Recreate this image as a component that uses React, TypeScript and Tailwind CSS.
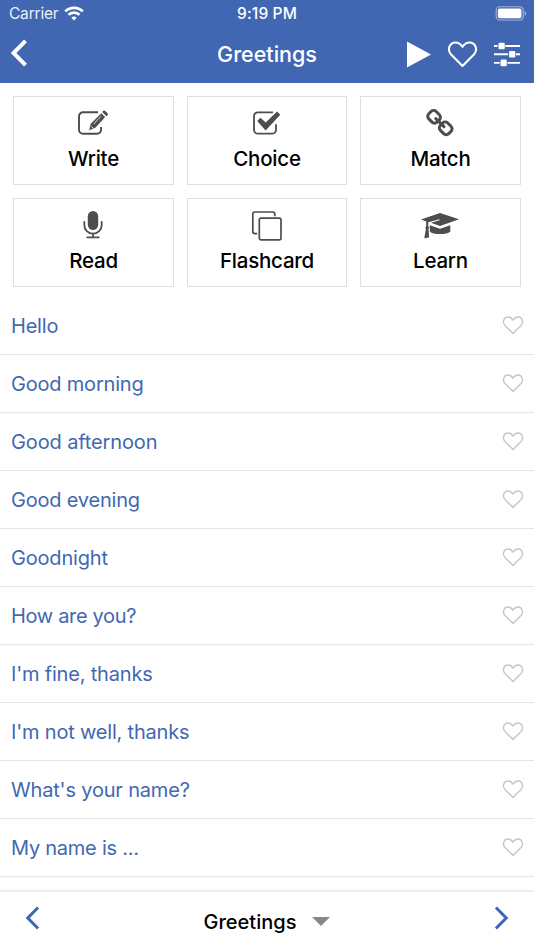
import type { ReactNode } from "react";

const HEART = "M15 25 L3.6 13.6 C-.8 8.6 2.2 1.5 8 1.5 C11.2 1.5 13.4 3.3 15 5.8 C16.6 3.3 18.8 1.5 22 1.5 C27.8 1.5 30.8 8.6 26.4 13.6 Z";

function Heart({ className, stroke }: { className: string; stroke: number }) {
  return (
    <svg viewBox="0 0 30 27" className={className} fill="none" stroke="currentColor" strokeWidth={stroke} strokeLinejoin="round">
      <path d={HEART} />
    </svg>
  );
}

const icons: Record<string, ReactNode> = {
  write: (
    <>
      <path d="M25 4.3H10a4 4 0 0 0-4 4v13.4a4 4 0 0 0 4 4h14a4 4 0 0 0 4-4V19" fill="none" stroke="currentColor" strokeWidth="1.9" />
      <path d="M28.3 5.1l4.2 3.9-10.1 11.1-6.6 2.7 1.6-7z" fill="currentColor" stroke="white" strokeWidth=".6" />
      <path d="M29.2 4l1-1c.6-.6 1.3-.6 1.9 0l2.4 2.3c.6.6.6 1.3 0 1.9l-1 1z" fill="currentColor" />
      <path d="M20.6 16.2l7.4-8M18 18.2l2.4 2.2" fill="none" stroke="white" strokeWidth=".8" />
    </>
  ),
  choice: (
    <>
      <path d="M26 4.3H11a4 4 0 0 0-4 4v13.4a4 4 0 0 0 4 4h14a4 4 0 0 0 4-4v-5.4" fill="none" stroke="currentColor" strokeWidth="1.8" />
      <path d="M10.2 13.1l3.2-3.4 5.3 4.9L30 3.4l3.3 3.3-14.7 15.8z" fill="currentColor" />
    </>
  ),
  match: (
    <g fill="none" stroke="currentColor" strokeWidth="3">
      <rect x="-5.9" y="-5.2" width="11.8" height="10.4" rx="3.6" transform="translate(14.1 8.8) rotate(45)" />
      <rect x="-5.9" y="-5.2" width="11.8" height="10.4" rx="3.6" transform="translate(25.7 20.3) rotate(45)" />
      <path d="M15.8 10.6l8.2 8" strokeLinecap="round" />
    </g>
  ),
  read: (
    <>
      <rect x="14.8" y="1" width="10.4" height="19" rx="5.2" fill="currentColor" />
      <path d="M11.3 11.8v3.1a8.7 8.7 0 0 0 17.4 0v-3.1M20 23.6v3.2M14.2 27.3h11.6" fill="none" stroke="currentColor" strokeWidth="1.8" strokeLinecap="round" />
    </>
  ),
  flashcard: (
    <g fill="none" stroke="currentColor" strokeWidth="1.7">
      <path d="M10.2 23.6H7.8a2 2 0 0 1-2-2V4a2 2 0 0 1 2-2h18a2 2 0 0 1 2 2v2.2" />
      <rect x="12.3" y="8.1" width="21.7" height="21.8" rx="1.8" />
    </g>
  ),
  learn: (
    <g fill="currentColor">
      <path d="M20 3l19 6.3-19 6.6-9.1-3.1 8.7-2.5-.3-1-11 3v4.1l1 1.2-.8 1.2.6 8.7-4.8.8 1.6-9.5-.7-1.3 1-1.2v-4.7L1 9.4z" />
      <path d="M9.8 15.3l10.2 3.4 10.3-3.5v6.2c-3.1 3.5-17.4 3.5-20.5 0z" />
    </g>
  ),
};

const tiles = [
  { id: "write", label: "Write", nudge: "mr-px" },
  { id: "choice", label: "Choice", nudge: "" },
  { id: "match", label: "Match", nudge: "mr-px" },
  { id: "read", label: "Read", nudge: "mr-px" },
  { id: "flashcard", label: "Flashcard", nudge: "" },
  { id: "learn", label: "Learn", nudge: "mr-px" },
];

const phrases = [
  { text: "Hello", track: "tracking-[-0.2px]" },
  { text: "Good morning", track: "tracking-[-0.2px]" },
  { text: "Good afternoon", track: "tracking-[-0.13px]" },
  { text: "Good evening", track: "tracking-[-0.2px]" },
  { text: "Goodnight", track: "tracking-[-0.18px]" },
  { text: "How are you?", track: "tracking-[-0.33px]" },
  { text: "I'm fine, thanks", track: "tracking-[-0.19px]" },
  { text: "I'm not well, thanks", track: "tracking-[-0.19px]" },
  { text: "What's your name?", track: "tracking-[-0.18px]" },
  { text: "My name is ...", track: "tracking-[-0.25px]" },
];

function Chevron({ className, right = false, stroke }: { className: string; right?: boolean; stroke: number }) {
  return (
    <svg viewBox="0 0 16 28" className={className} fill="none" stroke="currentColor" strokeWidth={stroke}>
      <path d={right ? "M1.5 1.8l12 12.2-12 12.2" : "M14.5 1.8L2.5 14l12 12.2"} />
    </svg>
  );
}

export default function App() {
  return (
    <div className="flex h-[950px] w-[534px] flex-col overflow-hidden bg-white font-['Inter',sans-serif]">
      <header className="h-[83px] shrink-0 bg-[#4267b2] text-white">
        <div className="grid h-7 grid-cols-3 items-center px-[9px]">
          <div className="flex items-center gap-[6px]">
            <span className="text-[15.5px] leading-7 tracking-[-0.2px] opacity-90">Carrier</span>
            <svg viewBox="0 0 20 15" className="mb-px h-[15px] w-5" fill="none" stroke="white" strokeWidth="2.7">
              <path d="M1.2 5.4a12.6 12.6 0 0 1 17.6 0M4.5 8.8a7.8 7.8 0 0 1 11 0" />
              <path d="M10 14.5l-2.7-2.8a3.9 3.9 0 0 1 5.4 0z" fill="white" stroke="none" />
            </svg>
          </div>
          <span className="text-center text-[15.5px] font-medium leading-7 tracking-[0.15px]">9:19 PM</span>
          <svg viewBox="0 0 32 16" className="-mr-[2px] h-4 w-8 justify-self-end">
            <rect x="1.2" y=".8" width="27" height="13.2" rx="3.5" fill="none" stroke="white" strokeOpacity=".5" strokeWidth="1.1" />
            <rect x="2.9" y="2.5" width="23.6" height="9.8" rx="1.8" fill="white" />
            <path d="M29.5 5.3c2.2.5 2.2 3.7 0 4.2z" fill="white" fillOpacity=".5" />
          </svg>
        </div>
        <div className="grid h-[52px] grid-cols-3 items-center pl-[10px] pr-[14px]">
          <Chevron className="mb-[2px] ml-px h-7 w-4 text-white" stroke={4} />
          <h1 className="ml-1 text-center text-[21.5px] font-medium leading-[52px]">Greetings</h1>
          <div className="flex items-center justify-end">
            <svg viewBox="0 0 24 27" className="h-[27px] w-6" fill="white"><path d="M0 .5l24 13-24 13z" /></svg>
            <Heart className="ml-4 h-[27px] w-[31px]" stroke={2.1} />
            <svg viewBox="0 0 26 26" className="ml-4 h-[26px] w-[26px]">
              <path d="M0 5h3.5M11.3 5H26M0 13.3h14M22 13.3h4M0 21.9h5.7M13.5 21.9H26" stroke="white" strokeWidth="1.9" />
              <g fill="white">
                <rect x="4.5" y="1.7" width="6.3" height="6.6" rx="1.3" />
                <rect x="15" y="10" width="6.3" height="6.6" rx="1.3" />
                <rect x="6.5" y="18.6" width="6.3" height="6.6" rx="1.3" />
              </g>
            </svg>
          </div>
        </div>
      </header>

      <main className="min-h-0 flex-1 overflow-hidden">
        <div className="grid grid-cols-[161px_160px_161px] gap-[13px] px-[13px] pt-[13px]">
          {tiles.map((tile) => (
            <button key={tile.id} className="flex h-[89px] flex-col items-center border border-[#dedfe0] pt-[11px]">
              <svg viewBox="0 0 40 32" className={`h-8 w-10 shrink-0 text-[#4d4d4d] ${tile.nudge}`}>{icons[tile.id]}</svg>
              <span className="mt-[5px] text-[20.5px] font-medium leading-7 tracking-[-0.22px] text-black">{tile.label}</span>
            </button>
          ))}
        </div>
        <ul className="mt-[10px]">
          {phrases.map((phrase) => (
            <li key={phrase.text} className="flex h-[58px] items-center justify-between border-b border-[#e6e6e7] pl-[11px] pr-[10px] pt-px">
              <span className={`text-[20px] leading-7 text-[#4267b2] ${phrase.track}`}>{phrase.text}</span>
              <Heart className="mb-px h-[19px] w-[22px] text-[#c7c7c7]" stroke={2} />
            </li>
          ))}
        </ul>
      </main>

      <footer className="grid h-[60px] shrink-0 grid-cols-3 items-center border-t-2 border-[#eeeeef] px-[25px]">
        <Chevron className="mb-[7px] h-6 w-[15px] text-[#4267b2]" stroke={3.6} />
        <div className="flex items-center justify-center gap-4 pt-[2px]">
          <span className="text-[20px] font-medium leading-7 text-black">Greetings</span>
          <svg viewBox="0 0 18 9" className="mb-[2px] h-[9px] w-[18px]" fill="#888"><path d="M0 0h18L9 9z" /></svg>
        </div>
        <Chevron right className="mb-[7px] h-6 w-[15px] justify-self-end text-[#4267b2]" stroke={3.6} />
      </footer>
    </div>
  );
}
